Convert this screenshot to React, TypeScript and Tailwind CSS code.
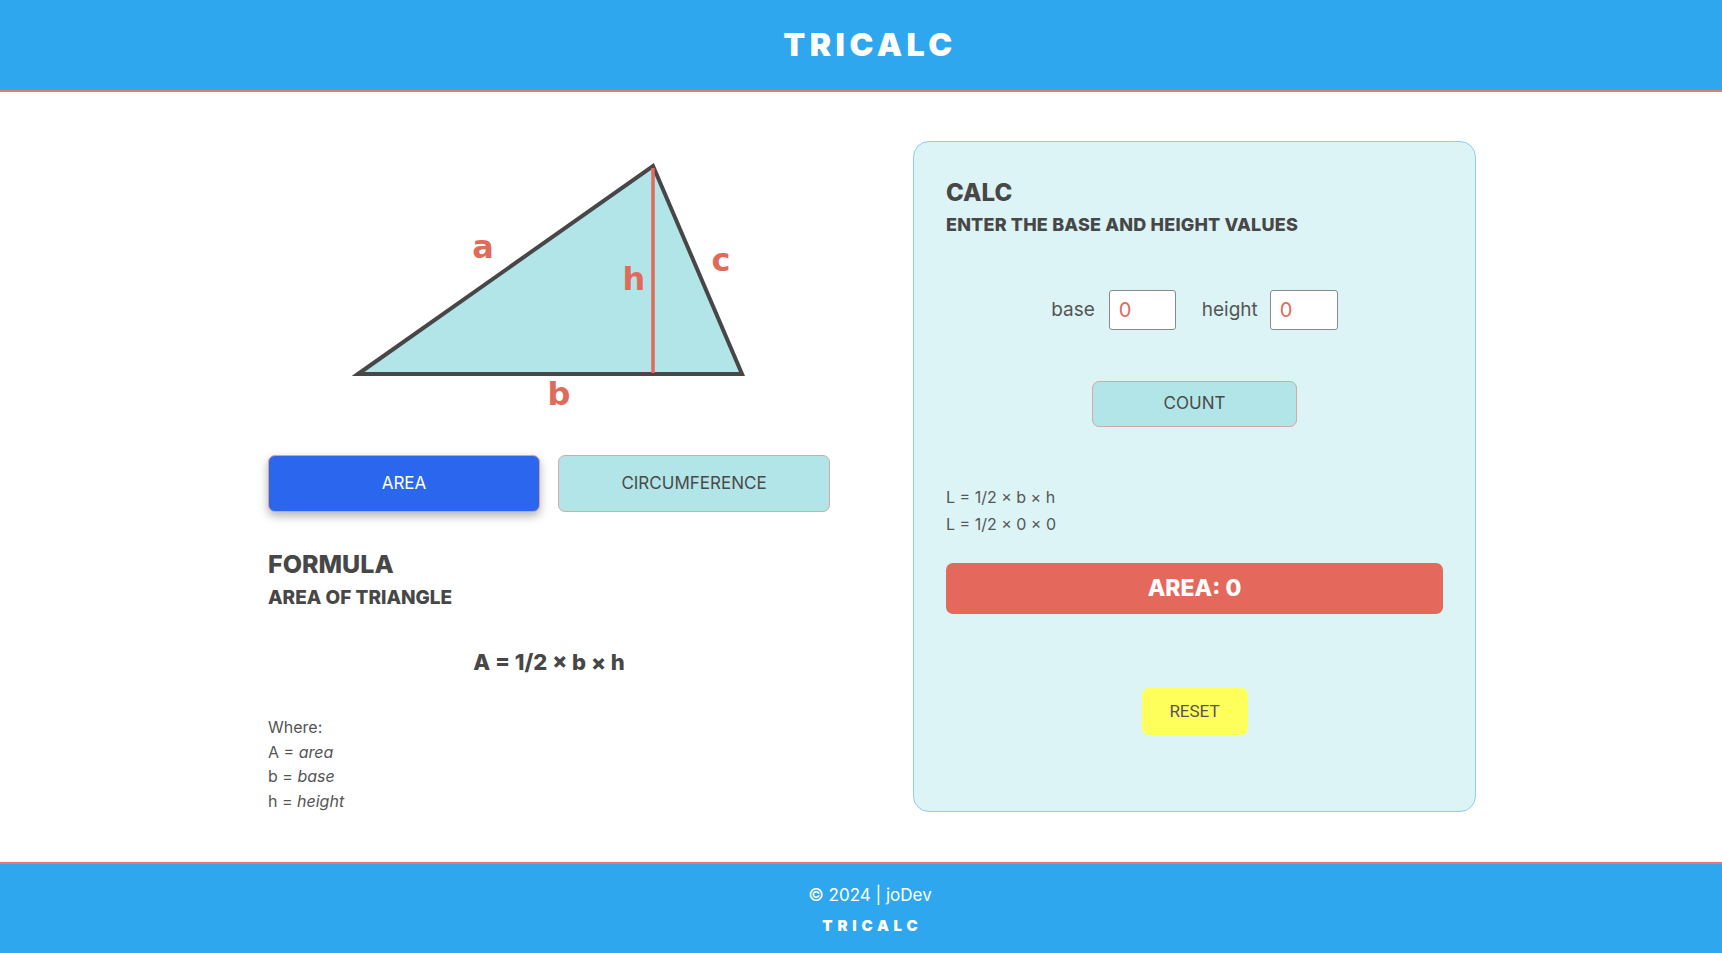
import React from "react";

const font = { fontFamily: "Inter, 'Noto Sans', sans-serif" };

function Triangle() {
  return (
    <svg width="562" height="314" viewBox="0 0 562 314" className="block">
      <polygon points="90,233 385,25 474,233" fill="#b2e5e8" stroke="#474747" strokeWidth="4" strokeLinejoin="miter" />
      <line x1="385" y1="27" x2="385" y2="232" stroke="#e06b5b" strokeWidth="3.5" />
      <g fill="#e06b5b" fontFamily="'DejaVu Sans', sans-serif" fontWeight="bold" fontSize="32" textAnchor="middle" dominantBaseline="central">
        <text x="215" y="106">a</text>
        <text x="366" y="138">h</text>
        <text x="453" y="119">c</text>
        <text x="291" y="253">b</text>
      </g>
    </svg>
  );
}

export default function App() {
  return (
    <div className="min-h-[953px] flex flex-col bg-white text-[#474747]" style={font}>
      <header className="h-[92px] bg-[#2ea7ee] border-b-2 border-[#e8786a] flex items-center justify-center pl-[18px]">
        <h1 className="text-[32px] font-black text-white tracking-[0.14em] leading-none">TRICALC</h1>
      </header>

      <main className="h-[770px] py-[49px] pl-[268px] flex gap-[83px]">
        <section className="w-[562px] flex flex-col">
          <Triangle />
          <div className="flex gap-[18px]">
            <button className="w-[272px] h-[57px] rounded-[7px] bg-[#2b66ef] border border-[#d9a39c] text-white text-[17px] shadow-[0_4px_10px_rgba(0,0,0,0.3)]">AREA</button>
            <button className="w-[272px] h-[57px] rounded-[7px] bg-[#b2e5e8] border border-[#d4a9a3] text-[#4a4a4a] text-[17px]">CIRCUMFERENCE</button>
          </div>
          <h2 className="mt-[34px] text-[25px] font-extrabold leading-[37px]">FORMULA</h2>
          <h3 className="mt-[1px] text-[19px] font-extrabold leading-[28px]">AREA OF TRIANGLE</h3>
          <p className="mt-[34px] text-center text-[22px] font-extrabold leading-[33px]">A = 1/2 × b × h</p>
          <div className="mt-[36px] text-[16px] leading-[24.5px] text-[#555]">
            <p>Where:</p>
            <p>A = <i>area</i></p>
            <p>b = <i>base</i></p>
            <p>h = <i>height</i></p>
          </div>
        </section>

        <section className="w-[563px] h-[671px] rounded-[16px] border border-[#8ccfea] bg-[#dcf4f5] px-[32px] pt-[33px] flex flex-col">
          <h2 className="text-[24px] font-extrabold leading-[36px]">CALC</h2>
          <h3 className="text-[18px] font-extrabold leading-[27px] tracking-[0.01em]">ENTER THE BASE AND HEIGHT VALUES</h3>
          <div className="mt-[52px] flex items-center justify-center h-[40px] text-[19px] text-[#555]">
            <span>base</span>
            <div className="ml-[14px] w-[67px] h-[40px] bg-white border border-[#8a8a8a] rounded-[3px] pl-[9px] flex items-center text-[20px] text-[#e06b5b]">0</div>
            <span className="ml-[26px]">height</span>
            <div className="ml-[12px] w-[68px] h-[40px] bg-white border border-[#8a8a8a] rounded-[3px] pl-[9px] flex items-center text-[20px] text-[#e06b5b]">0</div>
          </div>
          <div className="mt-[51px] flex justify-center">
            <button className="w-[205px] h-[46px] rounded-[7px] bg-[#b2e5e8] border border-[#d4a9a3] text-[#4a4a4a] text-[17px]">COUNT</button>
          </div>
          <div className="mt-[57px] text-[16px] leading-[27px] text-[#555]">
            <p>L = 1/2 × b × h</p>
            <p>L = 1/2 × 0 × 0</p>
          </div>
          <div className="mt-[25px] h-[51px] rounded-[7px] bg-[#e4695c] flex items-center justify-center text-white text-[23px] font-extrabold">AREA: 0</div>
          <div className="mt-[74px] flex justify-center">
            <button className="w-[106px] h-[47px] rounded-[7px] bg-[#ffff5c] text-[#555] text-[17px]" style={{ fontFamily: "Roboto, sans-serif" }}>RESET</button>
          </div>
        </section>
      </main>

      <footer className="h-[91px] bg-[#2ea7ee] border-t-2 border-[#e8786a] flex flex-col items-center justify-center text-white pl-[18px]">
        <p className="text-[17px] leading-[26px]">© 2024 | joDev</p>
        <p className="mt-[8px] text-[15px] font-black tracking-[0.32em] pl-[0.32em] leading-[20px]">TRICALC</p>
      </footer>
    </div>
  );
}
